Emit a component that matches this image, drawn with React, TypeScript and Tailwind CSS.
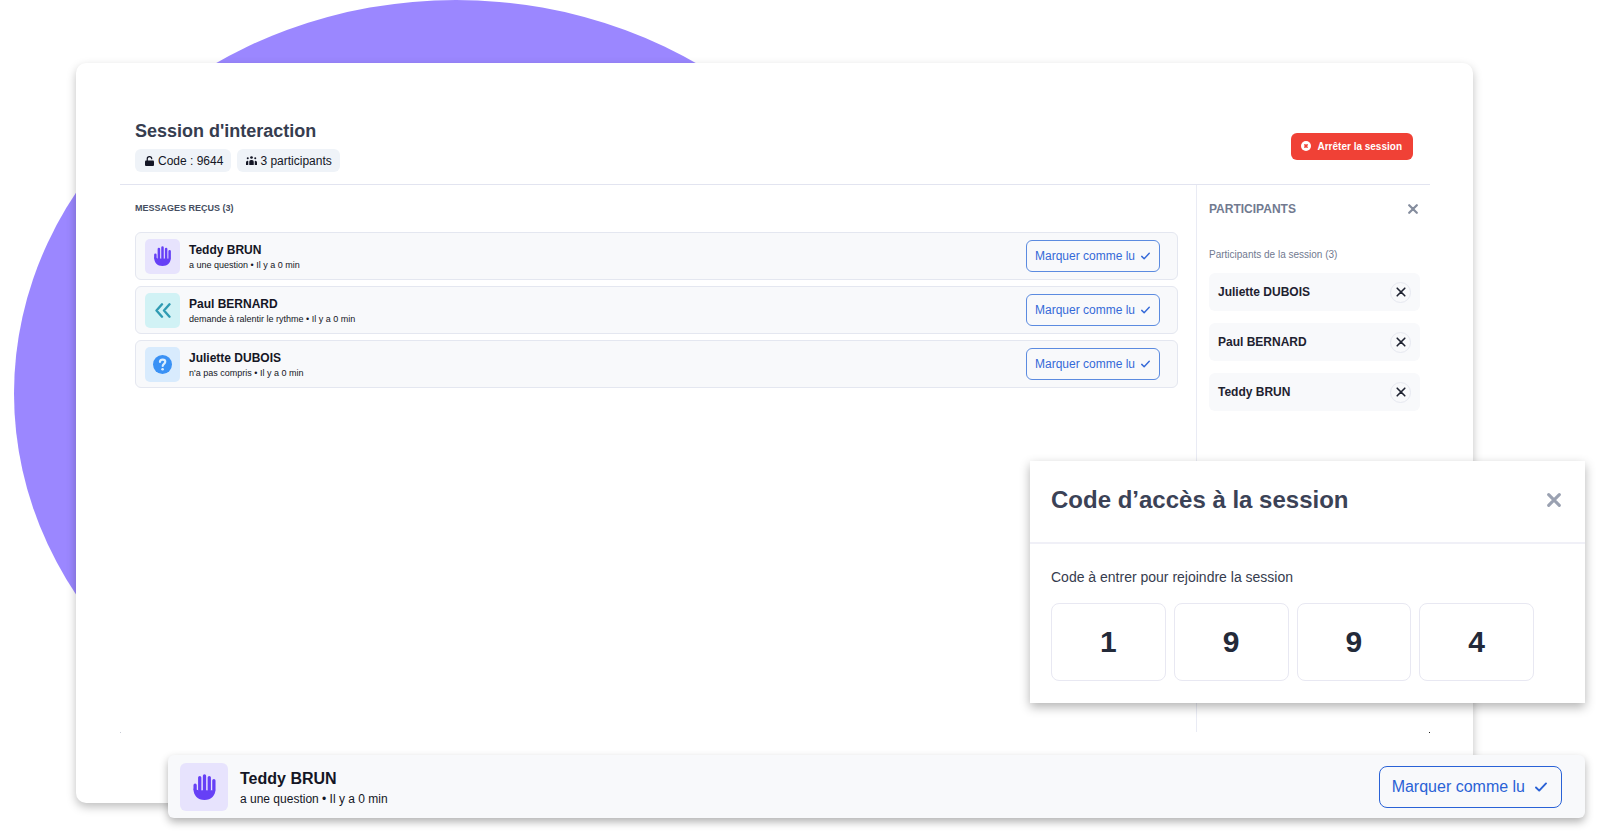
import React from "react";

type IconProps = { className?: string };

function HandIcon({ className = "" }: IconProps) {
  return (
    <svg viewBox="0 0 68 79" className={className} fill="none" stroke="currentColor" strokeLinecap="round" aria-hidden="true">
      <g strokeWidth="10">
        <path d="M5.500 34v12M19.500 11v37M34 5.500v43M48.500 11v37M62.500 20v28" />
      </g>
      <path d="M.5 45c6-1 8 3 14.500 4H67.500v-4c0 21-13 34-33.500 34S.5 66 .5 45Z" fill="currentColor" stroke="none" />
    </svg>
  );
}

function SlowIcon({ className = "" }: IconProps) {
  return (
    <svg viewBox="0 0 16 15" className={className} fill="none" stroke="currentColor" strokeWidth="2.400" strokeLinecap="round" strokeLinejoin="round" aria-hidden="true">
      <path d="M7 1.300 1.500 7.500 7 13.700M14.500 1.300 9 7.500l5.500 6.200" />
    </svg>
  );
}

function HelpIcon({ className = "" }: IconProps) {
  return (
    <svg viewBox="0 0 20 20" className={className} aria-hidden="true">
      <circle cx="10" cy="10" r="10" fill="currentColor" />
      <path d="M7.300 7.200C7.500 5.600 8.600 4.900 10.100 4.900c1.600 0 2.800.9 2.800 2.300 0 2-2.700 2.200-2.700 4.300" fill="none" stroke="#dbeefe" strokeWidth="2.300" strokeLinecap="round" />
      <circle cx="10.100" cy="15" r="1.400" fill="#dbeefe" />
    </svg>
  );
}

function LockIcon() {
  return (
    <svg viewBox="0 0 18 20" className="h-2.5 w-[9px]" aria-hidden="true">
      <rect x="0" y="9" width="18" height="11" rx="2" fill="currentColor" />
      <path d="M4.500 10V6a4.500 4.500 0 0 1 9-.5" fill="none" stroke="currentColor" strokeWidth="2.400" strokeLinecap="round" />
    </svg>
  );
}

function PeopleIcon() {
  return (
    <svg viewBox="0 0 22 18" className="h-[9px] w-[11px]" fill="currentColor" aria-hidden="true">
      <circle cx="11" cy="3" r="2.700" />
      <circle cx="3.500" cy="4.500" r="2" />
      <circle cx="18.500" cy="4.500" r="2" />
      <path d="M6.500 18v-6.500A3.500 3.500 0 0 1 10 8h2a3.500 3.500 0 0 1 3.500 3.500V18zM0 18v-5a3.500 3.500 0 0 1 4.500-3.200V18zM22 18v-5a3.500 3.500 0 0 0-4.500-3.200V18z" />
    </svg>
  );
}

function CheckIcon({ className = "" }: IconProps) {
  return (
    <svg viewBox="0 0 12 10" className={className} fill="none" stroke="currentColor" strokeWidth="1.900" strokeLinecap="round" strokeLinejoin="round" aria-hidden="true">
      <path d="M1 5.500 4.200 8.600 11 1.400" />
    </svg>
  );
}

function CrossIcon({ className = "" }: IconProps) {
  return (
    <svg viewBox="0 0 10 10" className={className} fill="none" stroke="currentColor" strokeLinecap="round" aria-hidden="true">
      <path d="M1.200 1.200 8.800 8.800M8.800 1.200 1.200 8.800" />
    </svg>
  );
}

function StopIcon() {
  return (
    <svg viewBox="0 0 10 10" className="size-2.5" aria-hidden="true">
      <circle cx="5" cy="5" r="5" fill="#fff" />
      <path d="m3.900 3.900 2.200 2.200M6.100 3.900 3.900 6.100" stroke="#f04136" strokeWidth="1.600" strokeLinecap="round" />
    </svg>
  );
}

const messages = [
  { name: "Teddy BRUN", text: "a une question • Il y a 0 min", tile: "bg-[#e7e3fd] text-[#6640f6]", icon: <HandIcon className="h-5 w-[17px]" /> },
  { name: "Paul BERNARD", text: "demande à ralentir le rythme • Il y a 0 min", tile: "bg-[#d1f2f5] text-[#2f9bb3]", icon: <SlowIcon className="h-[15px] w-4" /> },
  { name: "Juliette DUBOIS", text: "n'a pas compris • Il y a 0 min", tile: "bg-[#d8ebfd] text-[#3991f5]", icon: <HelpIcon className="size-[19px]" /> },
];

const participants = ["Juliette DUBOIS", "Paul BERNARD", "Teddy BRUN"];
const digits = ["1", "9", "9", "4"];

export default function App() {
  return (
    <div className="relative min-h-screen overflow-hidden bg-white pt-[63px] pr-[125px] pb-[30px] pl-[76px] font-['Liberation_Sans',Arial,sans-serif] text-[#141625]">
      <div className="absolute top-0 left-3.5 h-[787px] w-[884px] rounded-[50%] bg-[#9b87ff]" />

      <main className="relative flex min-h-[740px] flex-col rounded-[10px] bg-white pt-[57px] pr-[43px] pb-[70px] pl-11 shadow-[0_4px_10px_rgba(0,0,0,0.25)]">
        <header className="flex items-center justify-between border-b border-[#e2e4f0] pr-[17px] pb-3 pl-[15px]">
          <div>
            <h1 className="text-[18px] leading-[22px] font-bold text-[#363d4f]">Session d'interaction</h1>
            <div className="mt-[7px] flex gap-1.5 text-[12px]">
              <span className="flex h-[23px] items-center gap-1 rounded-md bg-[#eff3f8] pr-2 pl-2.5">
                <LockIcon />
                Code : 9644
              </span>
              <span className="flex h-[23px] items-center gap-[3px] rounded-md bg-[#eff3f8] pr-2 pl-[9px]">
                <PeopleIcon />
                3 participants
              </span>
            </div>
          </div>
          <button type="button" className="flex h-[27px] items-center gap-[7px] rounded-md bg-[#f04136] pr-[11px] pl-2.5 text-[10px] font-bold text-white">
            <StopIcon />
            Arrêter la session
          </button>
        </header>

        <div className="flex grow">
          <section className="grow pt-[17px] pr-[18px] pl-[15px]">
            <h2 className="text-[9px] leading-3 font-bold text-[#454d60]">MESSAGES REÇUS (3)</h2>
            <ul className="mt-[18px] flex flex-col gap-1.5">
              {messages.map((m) => (
                <li key={m.name} className="flex h-12 items-center rounded-md border border-[#e4e7f0] bg-[#f8f9fb] pr-[17px] pl-[9px]">
                  <span className={`flex size-[35px] shrink-0 items-center justify-center rounded-[5px] ${m.tile}`}>{m.icon}</span>
                  <div className="ml-[9px] grow pt-0.5">
                    <p className="text-[12px] leading-4 font-bold">{m.name}</p>
                    <p className="text-[9px] leading-[14px]">{m.text}</p>
                  </div>
                  <button type="button" className="flex h-8 items-center gap-1.5 rounded-md border border-[#5b8be0] pr-[9px] pl-2 text-[12px] text-[#3469d8]">
                    Marquer comme lu
                    <CheckIcon className="h-2 w-[9px]" />
                  </button>
                </li>
              ))}
            </ul>
          </section>

          <aside className="w-[234px] shrink-0 border-l border-[#e9ebf4] pt-4 pr-2.5 pl-3">
            <div className="flex h-4 items-center justify-between pr-0.5">
              <h2 className="text-[12px] font-bold text-[#717a90]">PARTICIPANTS</h2>
              <button type="button" aria-label="Fermer" className="text-[#858d9e]">
                <CrossIcon className="size-2.5 stroke-[2.2]" />
              </button>
            </div>
            <p className="mt-[30px] text-[10px] leading-4 text-[#717a90]">Participants de la session (3)</p>
            <ul className="mt-2.5 flex flex-col gap-3">
              {participants.map((name) => (
                <li key={name} className="flex h-[38px] items-center justify-between rounded-md bg-[#f8f9fb] px-[9px] text-[12px] font-bold text-[#1e2230]">
                  {name}
                  <button type="button" aria-label={`Retirer ${name}`} className="flex size-[21px] items-center justify-center rounded-full border border-[#e6e8f0]">
                    <CrossIcon className="size-2.5 stroke-[1.6]" />
                  </button>
                </li>
              ))}
            </ul>
          </aside>
        </div>

        <div className="flex items-end justify-between" aria-hidden="true">
          <span className="size-px bg-[#c9ccd6]" />
          <span className="size-px bg-[#222222]" />
        </div>
      </main>

      <section role="dialog" aria-labelledby="code-title" className="absolute top-[461px] right-[13px] w-[555px] bg-white pb-[22px] shadow-[0_4px_10px_rgba(0,0,0,0.3)]">
        <div className="flex h-[83px] items-center justify-between border-b-2 border-[#f0f0f7] pr-6 pb-1 pl-[21px]">
          <h2 id="code-title" className="text-[24px] font-bold text-[#3b4256]">Code d’accès à la session</h2>
          <button type="button" aria-label="Fermer" className="text-[#9aa1b1]">
            <CrossIcon className="size-3.5 stroke-[2.2]" />
          </button>
        </div>
        <p className="mt-[23px] pl-[21px] text-[14px] leading-5 text-[#363c4e]">Code à entrer pour rejoindre la session</p>
        <div className="mt-4 grid grid-cols-4 gap-2 pr-[51px] pl-[21px]">
          {digits.map((d, i) => (
            <div key={i} className="flex h-[78px] items-center justify-center rounded-lg border border-[#e8e8f2] pb-0.5 text-[30px] font-bold text-[#232a39]">
              {d}
            </div>
          ))}
        </div>
      </section>

      <section className="absolute top-[755px] right-[13px] left-[168px] flex h-[63px] items-center rounded-md bg-[#f8f9fb] pr-[23px] pl-3 shadow-[0_4px_8px_rgba(0,0,0,0.3)]">
        <span className="flex size-12 shrink-0 items-center justify-center rounded-md bg-[#e7e3fd] text-[#6640f6]">
          <HandIcon className="h-[26px] w-[23px]" />
        </span>
        <div className="ml-3 grow">
          <p className="text-[16px] leading-6 font-bold">Teddy BRUN</p>
          <p className="text-[12px] leading-4">a une question • Il y a 0 min</p>
        </div>
        <button type="button" className="flex h-[42px] items-center gap-2.5 rounded-lg border border-[#2a62d6] pr-3.5 pl-3 text-[16px] text-[#2a62d6]">
          Marquer comme lu
          <CheckIcon className="h-2.5 w-3" />
        </button>
      </section>
    </div>
  );
}
